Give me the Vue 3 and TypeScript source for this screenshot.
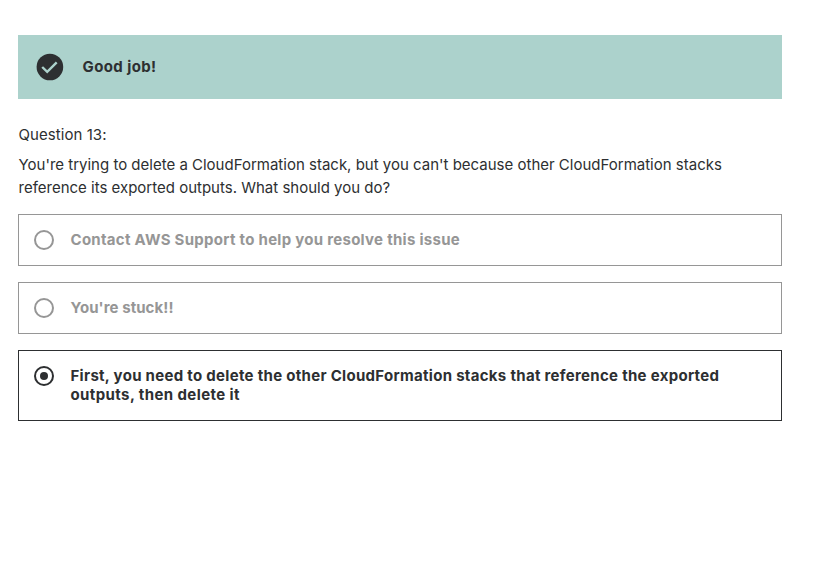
<script setup lang="ts">
interface Answer {
  lines: string[]
  selected: boolean
}
const answers: Answer[] = [
  { lines: ['Contact AWS Support to help you resolve this issue'], selected: false },
  { lines: ["You're stuck!!"], selected: false },
  {
    lines: [
      'First, you need to delete the other CloudFormation stacks that reference the exported',
      'outputs, then delete it',
    ],
    selected: true,
  },
]
</script>

<template>
  <main class="quiz">
    <div class="banner">
      <svg class="check" viewBox="0 0 28 28">
        <circle cx="13.9" cy="14" r="13.3" fill="#2d2f31" />
        <path d="M6.2 14l5 4.9 9.5-9.5" fill="none" stroke="#acd2cc" stroke-width="2.4" />
      </svg>
      <span class="praise">Good job!</span>
    </div>
    <p class="number">Question 13:</p>
    <div class="prompt">
      <div class="first">You're trying to delete a CloudFormation stack, but you can't because other CloudFormation stacks</div>
      <div>reference its exported outputs. What should you do?</div>
    </div>
    <ul class="answers">
      <li v-for="(a, i) in answers" :key="i" class="answer" :class="[{ selected: a.selected }, 'a' + i]">
        <span class="radio"></span>
        <div class="label">
          <div v-for="(l, j) in a.lines" :key="j" :class="'l' + j">{{ l }}</div>
        </div>
      </li>
    </ul>
  </main>
</template>

<style>
body { background: #fff; }
</style>
<style scoped>
.quiz {
  box-sizing: border-box;
  width: 817px;
  padding: 35px 35px 0 18px;
  font-family: Inter, "Liberation Sans", sans-serif;
  font-size: 15px;
  color: #2d2f31;
  white-space: nowrap;
}
.banner {
  display: flex;
  align-items: center;
  height: 64px;
  padding-left: 18px;
  background: #acd2cc;
}
.check { width: 28px; height: 28px; margin-right: 18.5px; }
.praise { font-weight: 700; letter-spacing: 0.4px; padding-bottom: 2px; }
.number { margin: 24px 0 7px 0.5px; line-height: 23px; letter-spacing: 0.06px; }
.prompt { margin-left: 0.5px; line-height: 23px; }
.answers { list-style: none; margin: 15px 0 0; padding: 0; display: grid; gap: 16px; }
.answer {
  box-sizing: border-box;
  display: flex;
  align-items: flex-start;
  padding: 15px;
  border: 1px solid #969696;
  color: #969696;
  font-weight: 700;
  letter-spacing: 0.28px;
}
.answer.selected { border-color: #2d2f31; color: #2d2f31; letter-spacing: 0.3px; }
.a1 { letter-spacing: 0.07px; }
.selected .l1 { letter-spacing: 0.4px; }
.radio {
  box-sizing: border-box;
  display: grid;
  place-items: center;
  width: 20px;
  height: 20px;
  margin-right: 16.5px;
  border: 2px solid currentColor;
  border-radius: 50%;
}
.selected .radio::after { content: ''; width: 8px; height: 8px; border-radius: 50%; background: currentColor; }
.label { line-height: 19px; padding-bottom: 1px; }
</style>
